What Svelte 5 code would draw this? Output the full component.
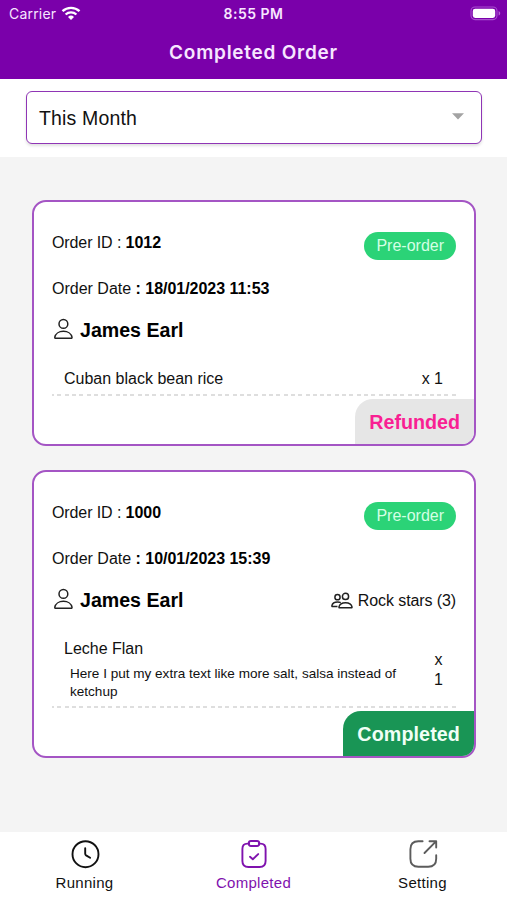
<script>
  let activeTab = $state("Completed");

  const tabs = ["Running", "Completed", "Setting"];

  const orders = [
    {
      id: "1012",
      date: "18/01/2023 11:53",
      type: "Pre-order",
      customer: "James Earl",
      table: "",
      status: "Refunded",
      items: [{ name: "Cuban black bean rice", note: "", qty: 1 }],
    },
    {
      id: "1000",
      date: "10/01/2023 15:39",
      type: "Pre-order",
      customer: "James Earl",
      table: "Rock stars (3)",
      status: "Completed",
      items: [
        {
          name: "Leche Flan",
          note: "Here I put my extra text like more salt, salsa instead of ketchup",
          qty: 1,
        },
      ],
    },
  ];
</script>

<div class="screen">
  <header>
    <div class="status-bar">
      <div class="carrier">
        <span>Carrier</span>
        <svg width="20" height="15" viewBox="0 0 20 15" fill="none" stroke="#fff">
          <path d="M1.5 5.2a12.4 12.4 0 0 1 17 0" stroke-width="2.4" />
          <path d="M4.6 8.5a7.9 7.9 0 0 1 10.8 0" stroke-width="2.3" />
          <path d="M10 14l-3-3.1a4.3 4.3 0 0 1 6 0z" fill="#fff" stroke="none" />
        </svg>
      </div>
      <span class="time">8:55 PM</span>
      <div class="battery">
        <svg width="31" height="15" viewBox="0 0 31 15">
          <rect x="1" y="1" width="26" height="12.6" rx="4" fill="none" stroke="#a94fd0" stroke-width="1.1" />
          <rect x="2.8" y="2.7" width="22.4" height="9.2" rx="2.4" fill="#fff" />
          <path d="M28.6 5v4.6c1-.4 1.6-1.3 1.6-2.3s-.6-1.9-1.6-2.3z" fill="#b565d6" />
        </svg>
      </div>
    </div>
    <h1>Completed Order</h1>
  </header>

  <div class="filter">
    <button class="select">
      <span>This Month</span>
      <svg width="12" height="7" viewBox="0 0 12 7"><path d="M0 .3h12L6 6.5z" fill="#a3a3a3" /></svg>
    </button>
  </div>

  <main>
    {#each orders as order}
      <article class="card">
        <div class="top">
          <p>Order ID : <b>{order.id}</b></p>
          <span class="pill">{order.type}</span>
        </div>
        <p class="date">Order Date <b>: {order.date}</b></p>
        <div class="people">
          <div class="customer">
            <svg width="20" height="22" viewBox="0 0 20 22" fill="none" stroke="#222" stroke-width="1.5">
              <circle cx="10.4" cy="5.9" r="4.4" />
              <path d="M2.6 20.2h15.6c.6 0 .9-.4.8-1-.6-3.3-4-5.9-8.600-5.900s-8 2.600-8.600 5.900c-.1.600.2 1 .8 1z" />
            </svg>
            <h2>{order.customer}</h2>
          </div>
          {#if order.table}
            <div class="table">
              <svg width="22" height="17" viewBox="0 0 22 17" fill="none" stroke="#222" stroke-width="1.5">
                <circle cx="14.5" cy="4.4" r="3.1" />
                <circle cx="6.5" cy="5.2" r="2.6" />
                <path d="M8.6 15.8h11.7c.6 0 .8-.4.7-.9-.5-2.5-3.2-4.200-6.500-4.200s-6 1.700-6.500 4.200c-.1.500 0 .9.6.9z" />
                <path d="M9.800 10.600c-.9-.4-2-.6-3.200-.6-2.900 0-5.200 1.400-5.700 3.600-.1.500.1.9.6.9h5" />
              </svg>
              <span>{order.table}</span>
            </div>
          {/if}
        </div>
        {#each order.items as item}
          <div class="item">
            <div class="item-info">
              <p>{item.name}</p>
              {#if item.note}
                <p class="note">{item.note}</p>
              {/if}
            </div>
            <span class="qty" class:narrow={item.note}>x {item.qty}</span>
          </div>
        {/each}
        <div class="status" class:completed={order.status === "Completed"}>{order.status}</div>
      </article>
    {/each}
  </main>

  <nav>
    {#each tabs as tab}
      <button class="tab" class:active={activeTab === tab} onclick={() => (activeTab = tab)}>
        <svg width="30" height="30" viewBox="0 0 30 30" fill="none" stroke="currentColor" stroke-width="1.9" stroke-linecap="round" stroke-linejoin="round">
          {#if tab === "Running"}
            <circle cx="15.5" cy="15.2" r="13" />
            <path d="M15.2 9.200v5.600c0 .7.300 1.200.9 1.600l4 2.400" />
          {:else if tab === "Completed"}
            <path d="M10 4.600H8.500C5 4.600 3.400 6.500 3.400 10v12c0 4 2 6 6 6h11.200c4 0 6-2 6-6V10c0-3.500-1.600-5.400-5.100-5.400H20" />
            <rect x="9.800" y="2" width="10.400" height="5" rx="2.200" />
            <path d="M11 17.800l2.800 2.500 5.400-5.200" />
          {:else}
            <g stroke="#5c5c5c">
              <path d="M14.600 2.200h-4.200c-5.600 0-8 2.400-8 8v9.600c0 5.600 2.400 8 8 8h9.800c5.600 0 8-2.400 8-8v-3.600" />
              <path d="M16.500 14L28 2.400M21.500 2.200H28.200V8.600" />
            </g>
          {/if}
        </svg>
        <span>{tab}</span>
      </button>
    {/each}
  </nav>
</div>

<style>
  :global(body) {
    margin: 0;
  }
  .screen {
    display: flex;
    flex-direction: column;
    width: 507px;
    height: 900px;
    overflow: hidden;
    background: #f4f4f4;
    color: #111;
    font: 16px/20px "Liberation Sans", Arial, sans-serif;
  }
  p,
  h1,
  h2 {
    margin: 0;
  }
  b {
    color: #000;
    letter-spacing: -0.03px;
  }
  svg {
    display: block;
    flex: none;
  }
  button {
    border: 0;
    background: none;
    color: inherit;
    font: inherit;
  }
  header {
    height: 79px;
    background: #7a00aa;
    color: #f7e6ff;
    font-family: Inter, sans-serif;
  }
  .status-bar {
    display: grid;
    grid-template-columns: 1fr auto 1fr;
    align-items: center;
    height: 28px;
    padding: 0 6px 0 9px;
    font-size: 14px;
  }
  .carrier {
    display: flex;
    align-items: center;
    gap: 5px;
    letter-spacing: 0.2px;
  }
  .carrier svg {
    margin-top: -2px;
  }
  .time {
    margin-right: 3px;
    font-weight: 600;
    letter-spacing: 0.5px;
  }
  .battery {
    display: flex;
    justify-content: flex-end;
    margin-top: -2px;
  }
  h1 {
    padding-top: 13px;
    font-size: 19px;
    font-weight: 600;
    letter-spacing: 0.75px;
    line-height: 24px;
    text-align: center;
  }
  .filter {
    height: 53px;
    padding: 12px 25px 13px 26px;
    background: #fff;
  }
  .select {
    display: flex;
    align-items: center;
    justify-content: space-between;
    width: 100%;
    height: 53px;
    padding: 0 17px 0 12px;
    box-sizing: border-box;
    border: 1.5px solid #8f35b5;
    border-radius: 6px;
    background: #fff;
    box-shadow: 0 2px 3px rgba(0, 0, 0, 0.12);
    font-size: 19.5px;
    letter-spacing: 0.15px;
  }
  .select svg {
    margin-top: -3px;
  }
  main {
    display: flex;
    flex: 1;
    flex-direction: column;
    gap: 24px;
    padding: 43px 31px 0 32px;
  }
  .card {
    padding: 30px 18px 0;
    border: 2px solid #a455c4;
    border-radius: 14px;
    background: #fff;
    overflow: hidden;
  }
  .top {
    display: flex;
    justify-content: space-between;
    height: 28px;
  }
  .top p {
    padding-top: 1px;
    letter-spacing: -0.1px;
  }
  .pill {
    padding: 0 12px;
    border-radius: 14px;
    background: #2bd377;
    color: #d4ffe4;
    line-height: 28px;
  }
  .date {
    margin-top: 19px;
  }
  .people {
    display: flex;
    align-items: center;
    justify-content: space-between;
    height: 30px;
    margin-top: 16px;
  }
  .customer {
    display: flex;
    align-items: center;
    gap: 7px;
    padding-left: 1px;
  }
  .customer svg {
    margin-top: -3px;
  }
  h2 {
    color: #000;
    font-size: 19.6px;
    line-height: 24px;
  }
  .table {
    display: flex;
    align-items: center;
    gap: 5px;
    padding-top: 1px;
    letter-spacing: -0.1px;
  }
  .item {
    display: flex;
    align-items: center;
    justify-content: space-between;
    padding: 24px 13px 7px 12px;
    background: repeating-linear-gradient(90deg, #dedede 0 2px, transparent 2px 5.3px, #dedede 5.3px 7.3px) bottom / 100% 2px no-repeat;
  }
  .note {
    width: 335px;
    margin-top: 6px;
    padding-left: 6px;
    font-size: 13.55px;
    line-height: 18px;
  }
  .qty.narrow {
    width: 9px;
    text-align: center;
  }
  .status {
    width: fit-content;
    height: 45px;
    margin: 3px -18px 0 auto;
    padding: 0 14px;
    border-radius: 18px 0 0 0;
    background: #e6e6e6;
    color: #f91f93;
    font-size: 19.7px;
    font-weight: bold;
    line-height: 47px;
  }
  .status.completed {
    background: #199555;
    color: #f0fff6;
    letter-spacing: 0.1px;
  }
  nav {
    display: grid;
    grid-template-columns: repeat(3, 1fr);
    height: 68px;
    background: #fff;
  }
  .tab {
    display: flex;
    flex-direction: column;
    align-items: center;
    gap: 4px;
    padding: 7px 0 0;
    font-size: 15px;
    letter-spacing: 0.3px;
  }
  .tab.active {
    color: #7f12ae;
  }
</style>
